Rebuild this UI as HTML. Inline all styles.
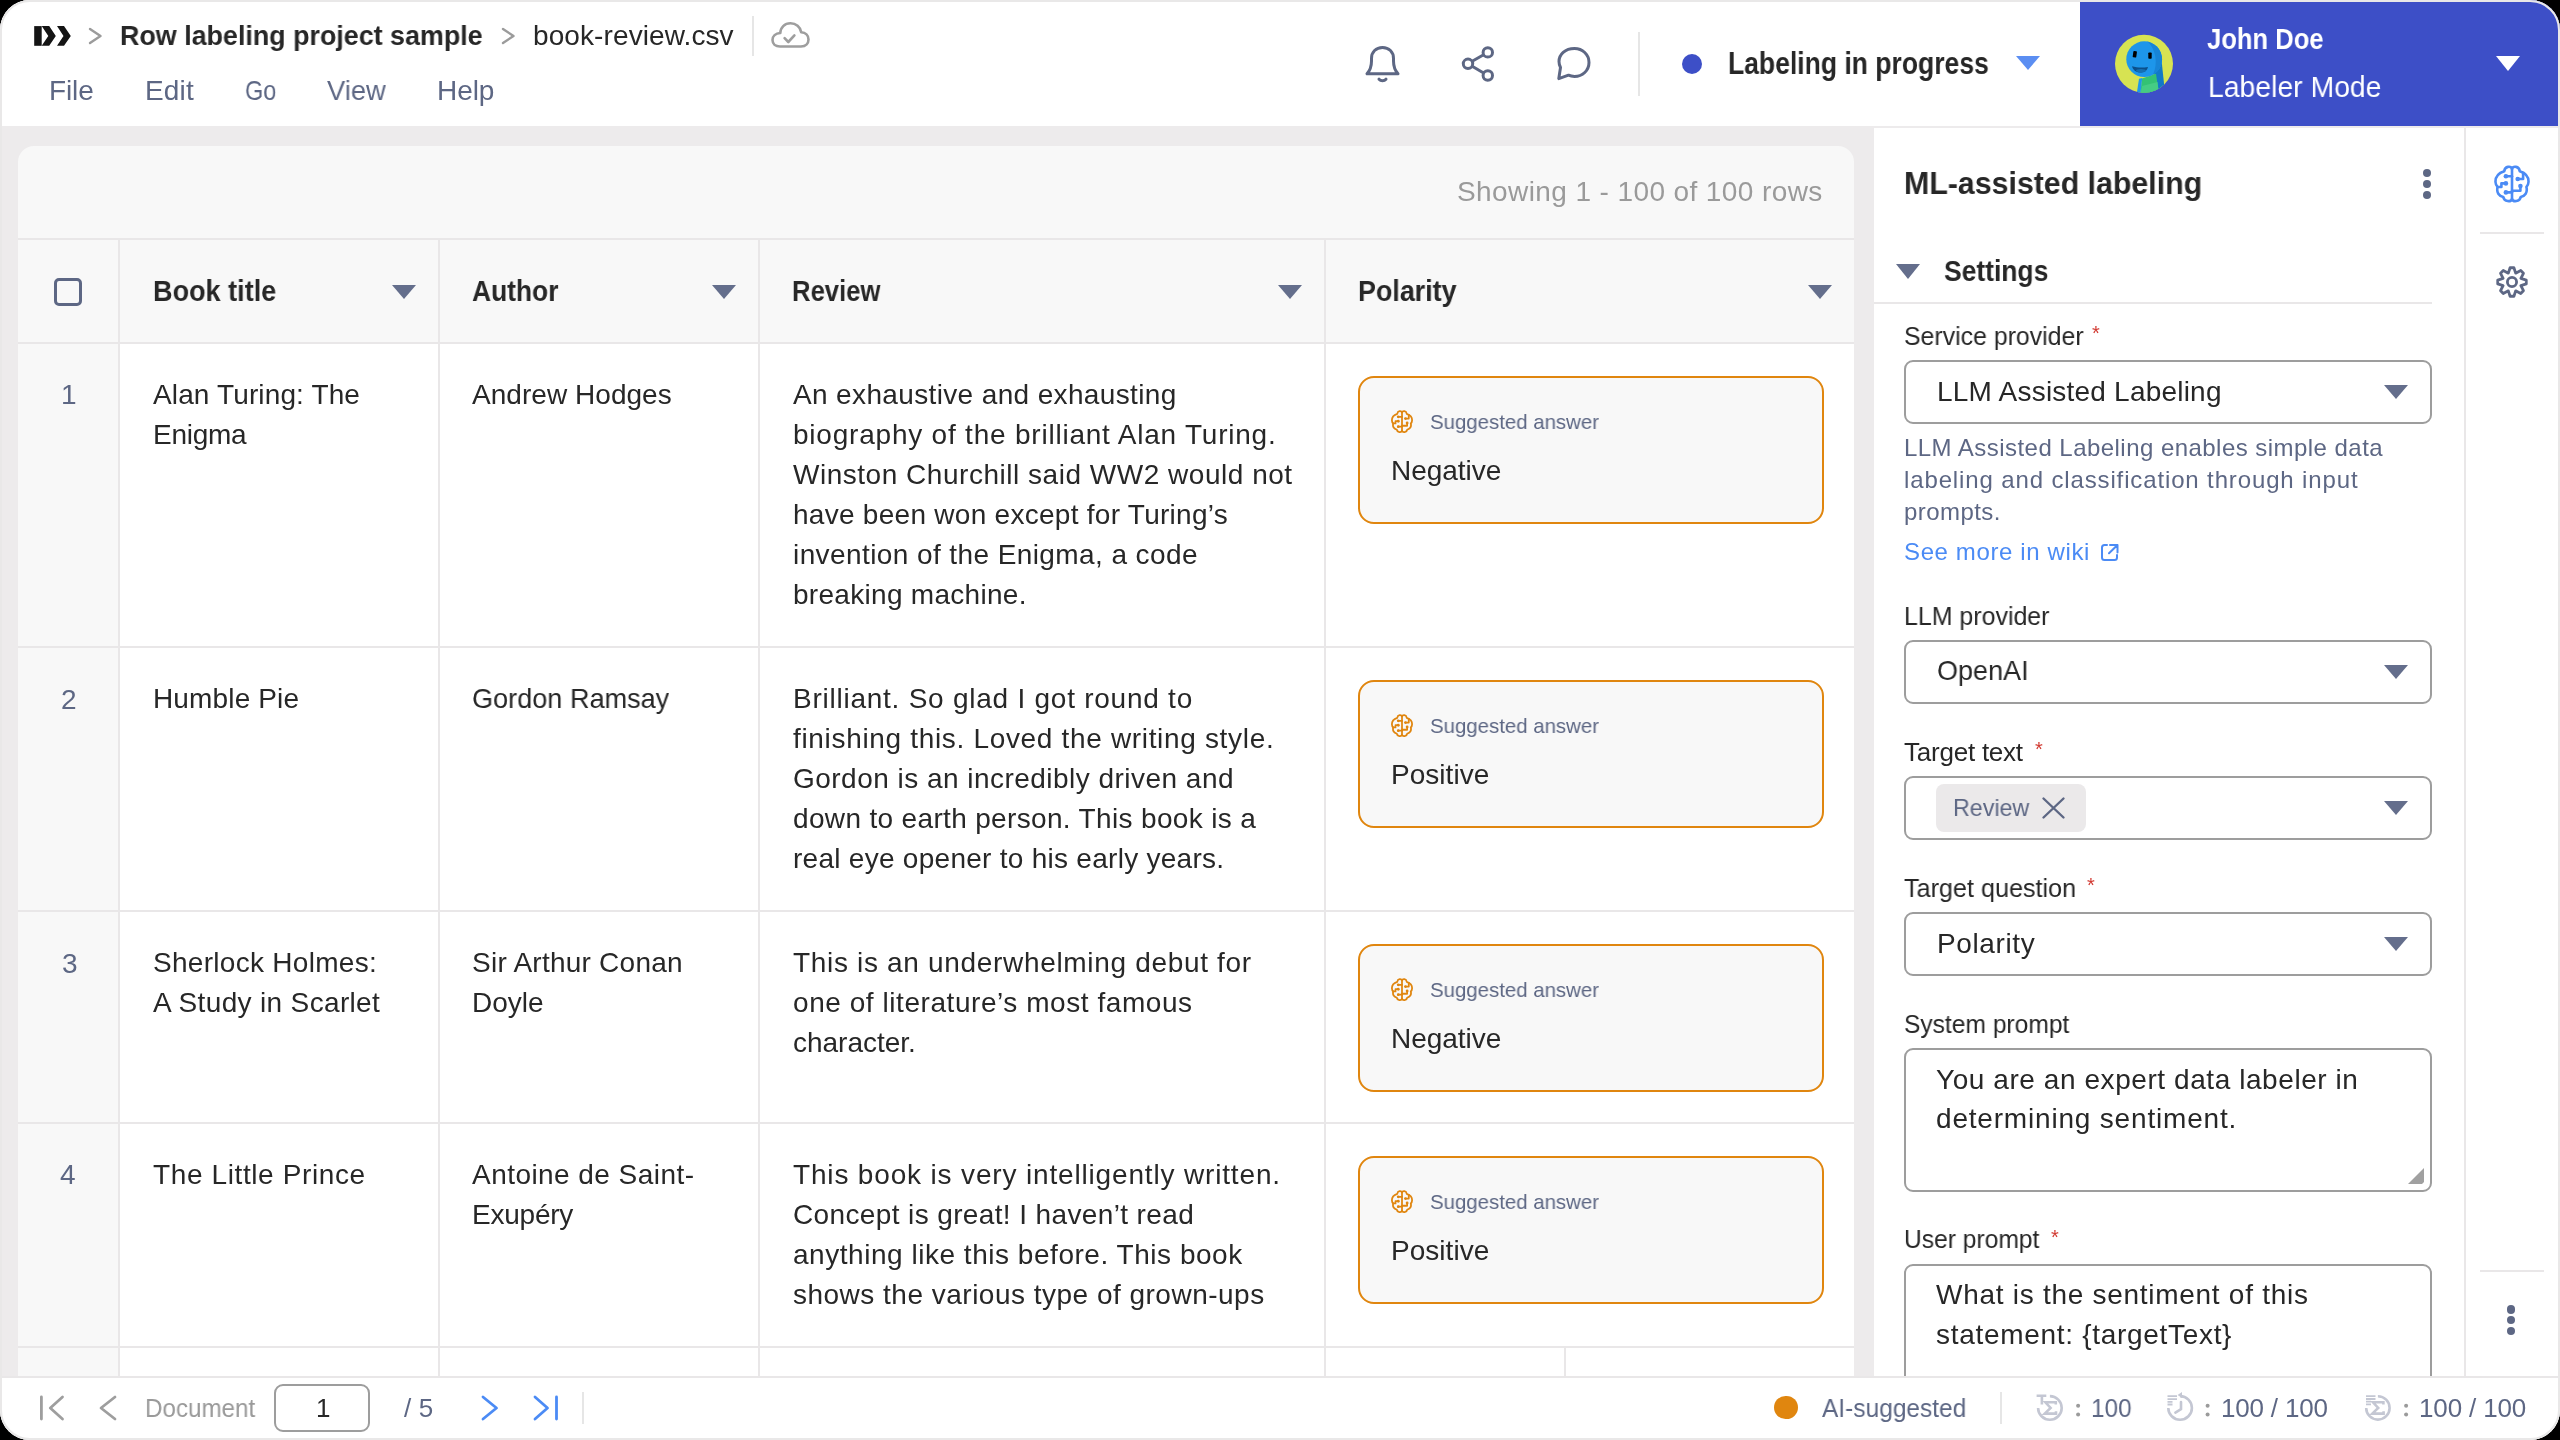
<!DOCTYPE html><html><head><meta charset="utf-8"><style>
html,body{margin:0;padding:0;width:2560px;height:1440px;overflow:hidden;background:#000;}
*{box-sizing:border-box;}
.win{position:absolute;left:0;top:0;width:2560px;height:1440px;border-radius:30px;overflow:hidden;background:#edebec;font-family:"Liberation Sans",sans-serif;}
.a{position:absolute;display:block;}
.t{position:absolute;white-space:nowrap;font-family:"Liberation Sans",sans-serif;will-change:transform;}
.hl{position:absolute;height:2px;background:#e9e7e8;}
.vl{position:absolute;width:2px;background:#e9e7e8;}
</style></head><body><div class="win">

<div class="a" style="left:0;top:0;width:2560px;height:126px;background:#fff"></div>
<div class="a" style="left:2080px;top:0;width:480px;height:126px;background:#3d4fc7"></div>
<svg class="a" style="left:0;top:0" width="80" height="60"><g fill="#141414"><rect x="34.2" y="26.1" width="7.5" height="19.7"/><polygon points="41.7,26.1 49.2,26.1 55.8,36 49.2,45.8 41.7,45.8 48.3,36"/><polygon points="57,26.1 64,26.1 70.8,36 64,45.8 57,45.8 63.5,36"/></g></svg>
<svg class="a" style="left:87px;top:26px" width="18" height="20"><polyline points="3,3 13.5,10 3,17" fill="none" stroke="#9b9b9b" stroke-width="2.4" stroke-linecap="round" stroke-linejoin="round"/></svg>
<svg class="a" style="left:499.5px;top:26px" width="18" height="20"><polyline points="3,3 13.5,10 3,17" fill="none" stroke="#9b9b9b" stroke-width="2.4" stroke-linecap="round" stroke-linejoin="round"/></svg>
<div class="a" style="left:752px;top:16px;width:2px;height:40px;background:#e6e6e6"></div>
<svg class="a" style="left:768px;top:19px" width="44" height="33" viewBox="0 0 44 33"><g fill="none" stroke="#9e9e9e" stroke-width="2.6" stroke-linecap="round" stroke-linejoin="round"><path d="M12,27.5 H33 C38,27.5 40.5,24 40.5,20.5 C40.5,16.5 37.5,13.5 33.2,13.2 C32.3,8 28,4.3 22.5,4.3 C16.5,4.3 12.5,8.5 12.3,14 C7.5,14.3 4.5,17.3 4.5,21 C4.5,24.8 7.5,27.5 12,27.5 Z"/><polyline points="16.6,19.2 20.3,23 26.4,16.4"/></g></svg>
<svg class="a" style="left:1362px;top:42px" width="40" height="44"><g fill="none" stroke="#5d6784" stroke-width="3" stroke-linecap="round" stroke-linejoin="round"><path d="M5,31.8 H36 C33,28.5 31.5,25 31.5,19 V16.5 C31.5,10 27,5.5 20.5,5.5 C14,5.5 9.5,10 9.5,16.5 V19 C9.5,25 8,28.5 5,31.8 Z"/><path d="M17,37.2 C18.8,39.2 22.2,39.2 24,37.2"/></g></svg>
<svg class="a" style="left:1458px;top:43px" width="40" height="42"><g fill="none" stroke="#5d6784" stroke-width="3"><circle cx="29.8" cy="9.4" r="4.7"/><circle cx="10" cy="20.8" r="4.7"/><circle cx="29.8" cy="32.5" r="4.7"/><path d="M14.2,18.3 L25.6,11.8 M14.2,23.3 L25.6,30"/></g></svg>
<svg class="a" style="left:1554px;top:44px" width="40" height="40"><g fill="none" stroke="#5d6784" stroke-width="3" stroke-linejoin="round"><path d="M6.5,23.5 C5.5,21.5 5,19.5 5,17.5 C5,10.5 11,4.5 20.5,4.5 C28.5,4.5 35,10.5 35,18.5 C35,26.5 28.5,32.5 20.5,32.5 C18.5,32.5 16.5,32.2 14.5,31.2 L4.8,34.6 Z"/></g></svg>
<div class="a" style="left:1638px;top:32px;width:2px;height:64px;background:#e6e6e6"></div>
<div class="a" style="left:1681.7px;top:53.5px;width:20.5px;height:20.5px;border-radius:50%;background:#3d4fc7"></div>
<svg class="a" style="left:2016px;top:56px" width="24" height="14"><polygon points="0,0 24,0 12.0,14" fill="#5b8ef2"/></svg>
<svg class="a" style="left:2113px;top:32px" width="62" height="64" viewBox="0 0 62 64"><defs><clipPath id="av"><circle cx="31" cy="31.75" r="29"/></clipPath></defs><circle cx="31" cy="31.75" r="29" fill="#d7e352"/><g clip-path="url(#av)"><polygon points="40,36 48.5,28 51.5,56 45,60" fill="#1279c6"/><polygon points="29,46.4 43,41.75 46,62 27,64" fill="#33c274"/><polygon points="29,54 44.5,50 46,62 27,64" fill="#45cc84"/><polygon points="26,46.75 29.2,46 27.2,64 23.4,64" fill="#1e98ea"/><circle cx="31.2" cy="27.2" r="17.9" fill="#1d96ea"/></g><clipPath id="hd"><circle cx="31.2" cy="27.2" r="17.9"/></clipPath><path clip-path="url(#hd)" d="M33,8 C45,9 50,20 49,30 C48,38 44,44 38,46 C45,36 45,18 33,8 Z" fill="#1784d6"/><rect x="20" y="19.2" width="3.6" height="6.3" rx="0.8" fill="#000" transform="rotate(8 21.8 22.3)"/><rect x="35.3" y="20.5" width="3.4" height="6.3" rx="0.8" fill="#000"/><path d="M19,34.3 C24,35.8 30,36 35,34.9 C34.2,38.8 31,40.6 27.5,40.6 C23,40.6 19.8,38 19,34.3 Z" fill="#0b4f8a"/><ellipse cx="28" cy="38.6" rx="5" ry="1.7" fill="#1670b3"/></svg>
<svg class="a" style="left:2496px;top:56px" width="24" height="15"><polygon points="0,0 24,0 12.0,15" fill="#fff"/></svg>
<div class="a" style="left:18px;top:146px;width:1836px;height:1240px;background:#f8f8f8;border-radius:16px 16px 0 0"></div>
<div class="a" style="left:120px;top:344px;width:1734px;height:1040px;background:#fff"></div>
<div class="hl" style="left:18px;top:238px;width:1836px"></div>
<div class="hl" style="left:18px;top:342px;width:1836px"></div>
<div class="hl" style="left:18px;top:646px;width:1836px"></div>
<div class="hl" style="left:18px;top:910px;width:1836px"></div>
<div class="hl" style="left:18px;top:1122px;width:1836px"></div>
<div class="hl" style="left:18px;top:1346px;width:1836px"></div>
<div class="vl" style="left:118px;top:240px;height:1140px"></div>
<div class="vl" style="left:438px;top:240px;height:1140px"></div>
<div class="vl" style="left:758px;top:240px;height:1140px"></div>
<div class="vl" style="left:1324px;top:240px;height:1140px"></div>
<div class="vl" style="left:1564px;top:1348px;height:40px"></div>
<div class="a" style="left:54px;top:278px;width:28px;height:28px;border:3px solid #5d6784;border-radius:5px"></div>
<svg class="a" style="left:392px;top:285px" width="24" height="14"><polygon points="0,0 24,0 12.0,14" fill="#646e8c"/></svg>
<svg class="a" style="left:712px;top:285px" width="24" height="14"><polygon points="0,0 24,0 12.0,14" fill="#646e8c"/></svg>
<svg class="a" style="left:1278px;top:285px" width="24" height="14"><polygon points="0,0 24,0 12.0,14" fill="#646e8c"/></svg>
<svg class="a" style="left:1808px;top:285px" width="24" height="14"><polygon points="0,0 24,0 12.0,14" fill="#646e8c"/></svg>
<div class="a" style="left:1358px;top:376px;width:466px;height:148px;border:2.2px solid #e0860f;border-radius:16px;background:#f8f8f8"></div>
<svg class="a" style="left:1391px;top:410px" width="22" height="23.2" viewBox="0 0 36 38" preserveAspectRatio="none"><g fill="none" stroke="#e0860f" stroke-width="2.9" stroke-linecap="round" stroke-linejoin="round"><path d="M18,4 C17,0.8 11,0.8 10.2,6.2 C4.5,8 1.3,11.5 1.5,17 C1.6,19.2 2.5,21 3.6,22 C2.2,27.5 5,31.2 9.3,32 C10.2,37 17,37.2 18,34 C19,37.2 25.8,37 26.7,32 C31,31.2 33.8,27.5 32.4,22 C33.5,21 34.4,19.2 34.5,17 C34.7,11.5 31.5,8 25.8,6.2 C25,0.8 19,0.8 18,4 Z"/><path d="M18,4 V34"/><path d="M11.9,11.2 H18"/><path d="M11.9,18.4 H7.4 V22 H3.6"/><path d="M11.9,27.4 H18"/><path d="M23.7,14 H29.1 V8"/><path d="M26.4,21.1 V25.8 H18"/></g><g fill="#e0860f"><circle cx="11.9" cy="11.2" r="2.3"/><circle cx="11.9" cy="18.4" r="2.3"/><circle cx="11.9" cy="27.4" r="2.3"/><circle cx="23.7" cy="14" r="2.3"/><circle cx="26.4" cy="21.1" r="2.3"/></g></svg>
<div class="a" style="left:1358px;top:680px;width:466px;height:148px;border:2.2px solid #e0860f;border-radius:16px;background:#f8f8f8"></div>
<svg class="a" style="left:1391px;top:714px" width="22" height="23.2" viewBox="0 0 36 38" preserveAspectRatio="none"><g fill="none" stroke="#e0860f" stroke-width="2.9" stroke-linecap="round" stroke-linejoin="round"><path d="M18,4 C17,0.8 11,0.8 10.2,6.2 C4.5,8 1.3,11.5 1.5,17 C1.6,19.2 2.5,21 3.6,22 C2.2,27.5 5,31.2 9.3,32 C10.2,37 17,37.2 18,34 C19,37.2 25.8,37 26.7,32 C31,31.2 33.8,27.5 32.4,22 C33.5,21 34.4,19.2 34.5,17 C34.7,11.5 31.5,8 25.8,6.2 C25,0.8 19,0.8 18,4 Z"/><path d="M18,4 V34"/><path d="M11.9,11.2 H18"/><path d="M11.9,18.4 H7.4 V22 H3.6"/><path d="M11.9,27.4 H18"/><path d="M23.7,14 H29.1 V8"/><path d="M26.4,21.1 V25.8 H18"/></g><g fill="#e0860f"><circle cx="11.9" cy="11.2" r="2.3"/><circle cx="11.9" cy="18.4" r="2.3"/><circle cx="11.9" cy="27.4" r="2.3"/><circle cx="23.7" cy="14" r="2.3"/><circle cx="26.4" cy="21.1" r="2.3"/></g></svg>
<div class="a" style="left:1358px;top:944px;width:466px;height:148px;border:2.2px solid #e0860f;border-radius:16px;background:#f8f8f8"></div>
<svg class="a" style="left:1391px;top:978px" width="22" height="23.2" viewBox="0 0 36 38" preserveAspectRatio="none"><g fill="none" stroke="#e0860f" stroke-width="2.9" stroke-linecap="round" stroke-linejoin="round"><path d="M18,4 C17,0.8 11,0.8 10.2,6.2 C4.5,8 1.3,11.5 1.5,17 C1.6,19.2 2.5,21 3.6,22 C2.2,27.5 5,31.2 9.3,32 C10.2,37 17,37.2 18,34 C19,37.2 25.8,37 26.7,32 C31,31.2 33.8,27.5 32.4,22 C33.5,21 34.4,19.2 34.5,17 C34.7,11.5 31.5,8 25.8,6.2 C25,0.8 19,0.8 18,4 Z"/><path d="M18,4 V34"/><path d="M11.9,11.2 H18"/><path d="M11.9,18.4 H7.4 V22 H3.6"/><path d="M11.9,27.4 H18"/><path d="M23.7,14 H29.1 V8"/><path d="M26.4,21.1 V25.8 H18"/></g><g fill="#e0860f"><circle cx="11.9" cy="11.2" r="2.3"/><circle cx="11.9" cy="18.4" r="2.3"/><circle cx="11.9" cy="27.4" r="2.3"/><circle cx="23.7" cy="14" r="2.3"/><circle cx="26.4" cy="21.1" r="2.3"/></g></svg>
<div class="a" style="left:1358px;top:1156px;width:466px;height:148px;border:2.2px solid #e0860f;border-radius:16px;background:#f8f8f8"></div>
<svg class="a" style="left:1391px;top:1190px" width="22" height="23.2" viewBox="0 0 36 38" preserveAspectRatio="none"><g fill="none" stroke="#e0860f" stroke-width="2.9" stroke-linecap="round" stroke-linejoin="round"><path d="M18,4 C17,0.8 11,0.8 10.2,6.2 C4.5,8 1.3,11.5 1.5,17 C1.6,19.2 2.5,21 3.6,22 C2.2,27.5 5,31.2 9.3,32 C10.2,37 17,37.2 18,34 C19,37.2 25.8,37 26.7,32 C31,31.2 33.8,27.5 32.4,22 C33.5,21 34.4,19.2 34.5,17 C34.7,11.5 31.5,8 25.8,6.2 C25,0.8 19,0.8 18,4 Z"/><path d="M18,4 V34"/><path d="M11.9,11.2 H18"/><path d="M11.9,18.4 H7.4 V22 H3.6"/><path d="M11.9,27.4 H18"/><path d="M23.7,14 H29.1 V8"/><path d="M26.4,21.1 V25.8 H18"/></g><g fill="#e0860f"><circle cx="11.9" cy="11.2" r="2.3"/><circle cx="11.9" cy="18.4" r="2.3"/><circle cx="11.9" cy="27.4" r="2.3"/><circle cx="23.7" cy="14" r="2.3"/><circle cx="26.4" cy="21.1" r="2.3"/></g></svg>
<div class="a" style="left:1874px;top:128px;width:686px;height:1260px;background:#fff"></div>
<div class="vl" style="left:2464px;top:128px;height:1260px"></div>
<div class="hl" style="left:2480px;top:232px;width:64px"></div>
<div class="hl" style="left:2480px;top:1270px;width:64px"></div>
<svg class="a" style="left:2494px;top:165px" width="36" height="38" viewBox="0 0 36 38" preserveAspectRatio="none"><g fill="none" stroke="#4b8bf5" stroke-width="2.6" stroke-linecap="round" stroke-linejoin="round"><path d="M18,4 C17,0.8 11,0.8 10.2,6.2 C4.5,8 1.3,11.5 1.5,17 C1.6,19.2 2.5,21 3.6,22 C2.2,27.5 5,31.2 9.3,32 C10.2,37 17,37.2 18,34 C19,37.2 25.8,37 26.7,32 C31,31.2 33.8,27.5 32.4,22 C33.5,21 34.4,19.2 34.5,17 C34.7,11.5 31.5,8 25.8,6.2 C25,0.8 19,0.8 18,4 Z"/><path d="M18,4 V34"/><path d="M11.9,11.2 H18"/><path d="M11.9,18.4 H7.4 V22 H3.6"/><path d="M11.9,27.4 H18"/><path d="M23.7,14 H29.1 V8"/><path d="M26.4,21.1 V25.8 H18"/></g><g fill="#4b8bf5"><circle cx="11.9" cy="11.2" r="2.3"/><circle cx="11.9" cy="18.4" r="2.3"/><circle cx="11.9" cy="27.4" r="2.3"/><circle cx="23.7" cy="14" r="2.3"/><circle cx="26.4" cy="21.1" r="2.3"/></g></svg>
<svg class="a" style="left:2492px;top:262px" width="40" height="40"><g fill="none" stroke="#5d6784" stroke-width="2.8" stroke-linejoin="round"><path d="M18.08,5.73 L21.92,5.73 L23.67,11.13 L28.74,8.55 L31.45,11.26 L28.87,16.33 L34.27,18.08 L34.27,21.92 L28.87,23.67 L31.45,28.74 L28.74,31.45 L23.67,28.87 L21.92,34.27 L18.08,34.27 L16.33,28.87 L11.26,31.45 L8.55,28.74 L11.13,23.67 L5.73,21.92 L5.73,18.08 L11.13,16.33 L8.55,11.26 L11.26,8.55 L16.33,11.13 Z"/><circle cx="20" cy="20" r="4.6"/></g></svg>
<div class="a" style="left:2422.7px;top:168.7px;width:8.6px;height:8.6px;border-radius:50%;background:#5d6784"></div>
<div class="a" style="left:2422.7px;top:179.7px;width:8.6px;height:8.6px;border-radius:50%;background:#5d6784"></div>
<div class="a" style="left:2422.7px;top:190.7px;width:8.6px;height:8.6px;border-radius:50%;background:#5d6784"></div>
<div class="a" style="left:2506.7px;top:1305.2px;width:8.6px;height:8.6px;border-radius:50%;background:#5d6784"></div>
<div class="a" style="left:2506.7px;top:1315.7px;width:8.6px;height:8.6px;border-radius:50%;background:#5d6784"></div>
<div class="a" style="left:2506.7px;top:1326.7px;width:8.6px;height:8.6px;border-radius:50%;background:#5d6784"></div>
<svg class="a" style="left:1896px;top:264px" width="24" height="15"><polygon points="0,0 24,0 12.0,15" fill="#646e8c"/></svg>
<div class="hl" style="left:1874px;top:302px;width:558px"></div>
<div class="a" style="left:1904px;top:360px;width:528px;height:64px;border:2px solid #9d9d9d;border-radius:9px;background:#fff"></div>
<svg class="a" style="left:2384px;top:385px" width="24" height="14"><polygon points="0,0 24,0 12.0,14" fill="#646e8c"/></svg>
<div class="a" style="left:1904px;top:640px;width:528px;height:64px;border:2px solid #9d9d9d;border-radius:9px;background:#fff"></div>
<svg class="a" style="left:2384px;top:665px" width="24" height="14"><polygon points="0,0 24,0 12.0,14" fill="#646e8c"/></svg>
<div class="a" style="left:1904px;top:776px;width:528px;height:64px;border:2px solid #9d9d9d;border-radius:9px;background:#fff"></div>
<svg class="a" style="left:2384px;top:801px" width="24" height="14"><polygon points="0,0 24,0 12.0,14" fill="#646e8c"/></svg>
<div class="a" style="left:1904px;top:912px;width:528px;height:64px;border:2px solid #9d9d9d;border-radius:9px;background:#fff"></div>
<svg class="a" style="left:2384px;top:937px" width="24" height="14"><polygon points="0,0 24,0 12.0,14" fill="#646e8c"/></svg>
<div class="a" style="left:1936px;top:784px;width:150px;height:48px;border-radius:8px;background:#ebe9ea"></div>
<svg class="a" style="left:2040px;top:795px" width="28" height="26"><g stroke="#5d6784" stroke-width="2.4" stroke-linecap="round"><path d="M3.5,3.5 L23.5,22.5 M23.5,3.5 L3.5,22.5"/></g></svg>
<div class="t" style="left:2092px;top:323px;font-size:20px;line-height:20px;color:#d23a32">*</div>
<div class="t" style="left:2035px;top:739px;font-size:20px;line-height:20px;color:#d23a32">*</div>
<div class="t" style="left:2087px;top:875px;font-size:20px;line-height:20px;color:#d23a32">*</div>
<div class="t" style="left:2051px;top:1227px;font-size:20px;line-height:20px;color:#d23a32">*</div>
<svg class="a" style="left:2098px;top:541px" width="24" height="22"><g fill="none" stroke="#4b8bf5" stroke-width="2" stroke-linecap="round" stroke-linejoin="round"><path d="M9,4 H6.5 C5,4 4,5 4,6.5 V16.5 C4,18 5,19 6.5,19 H16.5 C18,19 19,18 19,16.5 V14"/><path d="M12,4 H19.5 V11.5 M19.5,4 L11,12.3"/></g></svg>
<div class="a" style="left:1904px;top:1048px;width:528px;height:144px;border:2px solid #9d9d9d;border-radius:9px;background:#fff"></div>
<svg class="a" style="left:2406px;top:1166px" width="20" height="20"><polygon points="2,18 18,2 18,16 16,18" fill="#a0a0a0"/></svg>
<div class="a" style="left:1904px;top:1264px;width:528px;height:160px;border:2px solid #9d9d9d;border-radius:9px;background:#fff"></div>
<div class="t" style="left:120.3px;top:16.5px;font-size:28px;line-height:38px;font-weight:700;color:#272727;letter-spacing:0.000px;transform:scaleX(0.9590);transform-origin:0 0;">Row labeling project sample</div>
<div class="t" style="left:533.0px;top:16.5px;font-size:28px;line-height:38px;color:#272727;letter-spacing:0.100px;">book-review.csv</div>
<div class="t" style="left:49.4px;top:72px;font-size:28px;line-height:38px;color:#5d6784;letter-spacing:-0.133px;">File</div>
<div class="t" style="left:145.0px;top:72px;font-size:28px;line-height:38px;color:#5d6784;letter-spacing:0.167px;">Edit</div>
<div class="t" style="left:245.0px;top:72px;font-size:28px;line-height:38px;color:#5d6784;letter-spacing:0.000px;transform:scaleX(0.8378);transform-origin:0 0;">Go</div>
<div class="t" style="left:326.5px;top:72px;font-size:28px;line-height:38px;color:#5d6784;letter-spacing:0.000px;transform:scaleX(0.9754);transform-origin:0 0;">View</div>
<div class="t" style="left:436.7px;top:72px;font-size:28px;line-height:38px;color:#5d6784;letter-spacing:-0.067px;">Help</div>
<div class="t" style="left:1728.0px;top:42px;font-size:32px;line-height:42px;font-weight:700;color:#272727;letter-spacing:0.000px;transform:scaleX(0.8286);transform-origin:0 0;">Labeling in progress</div>
<div class="t" style="left:2207.0px;top:19px;font-size:30px;line-height:40px;font-weight:700;color:#fff;letter-spacing:0.000px;transform:scaleX(0.8526);transform-origin:0 0;">John Doe</div>
<div class="t" style="left:2208.0px;top:67px;font-size:30px;line-height:40px;color:#fff;letter-spacing:0.000px;transform:scaleX(0.9454);transform-origin:0 0;">Labeler Mode</div>
<div class="t" style="left:1456.6px;top:173px;font-size:28px;line-height:38px;color:#9a9a9a;letter-spacing:0.400px;">Showing 1 - 100 of 100 rows</div>
<div class="t" style="left:152.5px;top:271px;font-size:30px;line-height:40px;font-weight:700;color:#272727;letter-spacing:0.000px;transform:scaleX(0.9015);transform-origin:0 0;">Book title</div>
<div class="t" style="left:472.0px;top:271px;font-size:30px;line-height:40px;font-weight:700;color:#272727;letter-spacing:0.000px;transform:scaleX(0.8788);transform-origin:0 0;">Author</div>
<div class="t" style="left:792.0px;top:271px;font-size:30px;line-height:40px;font-weight:700;color:#272727;letter-spacing:0.000px;transform:scaleX(0.8558);transform-origin:0 0;">Review</div>
<div class="t" style="left:1358.3px;top:271px;font-size:30px;line-height:40px;font-weight:700;color:#272727;letter-spacing:0.000px;transform:scaleX(0.8964);transform-origin:0 0;">Polarity</div>
<div class="t" style="left:61.0px;top:376px;font-size:28px;line-height:38px;color:#5d6784;letter-spacing:0.000px;">1</div>
<div class="t" style="left:61.3px;top:681px;font-size:28px;line-height:38px;color:#5d6784;letter-spacing:0.000px;">2</div>
<div class="t" style="left:61.5px;top:945px;font-size:28px;line-height:38px;color:#5d6784;letter-spacing:0.000px;">3</div>
<div class="t" style="left:59.8px;top:1156px;font-size:28px;line-height:38px;color:#5d6784;letter-spacing:0.000px;">4</div>
<div class="t" style="left:152.5px;top:376px;font-size:28px;line-height:38px;color:#272727;letter-spacing:0.133px;">Alan Turing: The</div>
<div class="t" style="left:152.5px;top:416px;font-size:28px;line-height:38px;color:#272727;letter-spacing:-0.250px;">Enigma</div>
<div class="t" style="left:472.2px;top:376px;font-size:28px;line-height:38px;color:#272727;letter-spacing:0.042px;">Andrew Hodges</div>
<div class="t" style="left:792.7px;top:376px;font-size:28px;line-height:38px;color:#272727;letter-spacing:0.359px;">An exhaustive and exhausting</div>
<div class="t" style="left:792.7px;top:416px;font-size:28px;line-height:38px;color:#272727;letter-spacing:0.784px;">biography of the brilliant Alan Turing.</div>
<div class="t" style="left:792.7px;top:456px;font-size:28px;line-height:38px;color:#272727;letter-spacing:0.523px;">Winston Churchill said WW2 would not</div>
<div class="t" style="left:792.7px;top:496px;font-size:28px;line-height:38px;color:#272727;letter-spacing:0.275px;">have been won except for Turing’s</div>
<div class="t" style="left:792.7px;top:536px;font-size:28px;line-height:38px;color:#272727;letter-spacing:0.410px;">invention of the Enigma, a code</div>
<div class="t" style="left:792.7px;top:576px;font-size:28px;line-height:38px;color:#272727;letter-spacing:0.294px;">breaking machine.</div>
<div class="t" style="left:152.5px;top:680px;font-size:28px;line-height:38px;color:#272727;letter-spacing:0.144px;">Humble Pie</div>
<div class="t" style="left:472.2px;top:680px;font-size:28px;line-height:38px;color:#272727;letter-spacing:0.000px;transform:scaleX(0.9676);transform-origin:0 0;">Gordon Ramsay</div>
<div class="t" style="left:792.7px;top:680px;font-size:28px;line-height:38px;color:#272727;letter-spacing:0.753px;">Brilliant. So glad I got round to</div>
<div class="t" style="left:792.7px;top:720px;font-size:28px;line-height:38px;color:#272727;letter-spacing:0.672px;">finishing this. Loved the writing style.</div>
<div class="t" style="left:792.7px;top:760px;font-size:28px;line-height:38px;color:#272727;letter-spacing:0.473px;">Gordon is an incredibly driven and</div>
<div class="t" style="left:792.7px;top:800px;font-size:28px;line-height:38px;color:#272727;letter-spacing:0.340px;">down to earth person. This book is a</div>
<div class="t" style="left:792.7px;top:840px;font-size:28px;line-height:38px;color:#272727;letter-spacing:0.274px;">real eye opener to his early years.</div>
<div class="t" style="left:152.5px;top:944px;font-size:28px;line-height:38px;color:#272727;letter-spacing:0.287px;">Sherlock Holmes:</div>
<div class="t" style="left:152.5px;top:984px;font-size:28px;line-height:38px;color:#272727;letter-spacing:0.341px;">A Study in Scarlet</div>
<div class="t" style="left:472.2px;top:944px;font-size:28px;line-height:38px;color:#272727;letter-spacing:0.240px;">Sir Arthur Conan</div>
<div class="t" style="left:472.2px;top:984px;font-size:28px;line-height:38px;color:#272727;letter-spacing:0.025px;">Doyle</div>
<div class="t" style="left:792.7px;top:944px;font-size:28px;line-height:38px;color:#272727;letter-spacing:0.676px;">This is an underwhelming debut for</div>
<div class="t" style="left:792.7px;top:984px;font-size:28px;line-height:38px;color:#272727;letter-spacing:0.557px;">one of literature’s most famous</div>
<div class="t" style="left:792.7px;top:1024px;font-size:28px;line-height:38px;color:#272727;letter-spacing:-0.011px;">character.</div>
<div class="t" style="left:152.5px;top:1156px;font-size:28px;line-height:38px;color:#272727;letter-spacing:0.613px;">The Little Prince</div>
<div class="t" style="left:472.2px;top:1156px;font-size:28px;line-height:38px;color:#272727;letter-spacing:0.450px;">Antoine de Saint-</div>
<div class="t" style="left:472.2px;top:1196px;font-size:28px;line-height:38px;color:#272727;letter-spacing:-0.233px;">Exupéry</div>
<div class="t" style="left:792.7px;top:1156px;font-size:28px;line-height:38px;color:#272727;letter-spacing:0.838px;">This book is very intelligently written.</div>
<div class="t" style="left:792.7px;top:1196px;font-size:28px;line-height:38px;color:#272727;letter-spacing:0.374px;">Concept is great! I haven’t read</div>
<div class="t" style="left:792.7px;top:1236px;font-size:28px;line-height:38px;color:#272727;letter-spacing:0.531px;">anything like this before. This book</div>
<div class="t" style="left:792.7px;top:1276px;font-size:28px;line-height:38px;color:#272727;letter-spacing:0.491px;">shows the various type of grown-ups</div>
<div class="t" style="left:1430.3px;top:406px;font-size:21px;line-height:31px;color:#5d6784;letter-spacing:0.000px;transform:scaleX(0.9718);transform-origin:0 0;">Suggested answer</div>
<div class="t" style="left:1391.3px;top:452px;font-size:28px;line-height:38px;color:#272727;letter-spacing:-0.043px;">Negative</div>
<div class="t" style="left:1430.3px;top:710px;font-size:21px;line-height:31px;color:#5d6784;letter-spacing:0.000px;transform:scaleX(0.9718);transform-origin:0 0;">Suggested answer</div>
<div class="t" style="left:1391.3px;top:756px;font-size:28px;line-height:38px;color:#272727;letter-spacing:0.029px;">Positive</div>
<div class="t" style="left:1430.3px;top:974px;font-size:21px;line-height:31px;color:#5d6784;letter-spacing:0.000px;transform:scaleX(0.9718);transform-origin:0 0;">Suggested answer</div>
<div class="t" style="left:1391.3px;top:1020px;font-size:28px;line-height:38px;color:#272727;letter-spacing:-0.043px;">Negative</div>
<div class="t" style="left:1430.3px;top:1186px;font-size:21px;line-height:31px;color:#5d6784;letter-spacing:0.000px;transform:scaleX(0.9718);transform-origin:0 0;">Suggested answer</div>
<div class="t" style="left:1391.3px;top:1232px;font-size:28px;line-height:38px;color:#272727;letter-spacing:0.029px;">Positive</div>
<div class="t" style="left:1904.3px;top:162px;font-size:32px;line-height:42px;font-weight:700;color:#272727;letter-spacing:0.000px;transform:scaleX(0.9473);transform-origin:0 0;">ML-assisted labeling</div>
<div class="t" style="left:1944.3px;top:251px;font-size:30px;line-height:40px;font-weight:700;color:#272727;letter-spacing:0.000px;transform:scaleX(0.8814);transform-origin:0 0;">Settings</div>
<div class="t" style="left:1904.3px;top:318px;font-size:26px;line-height:36px;color:#272727;letter-spacing:0.000px;transform:scaleX(0.9559);transform-origin:0 0;">Service provider</div>
<div class="t" style="left:1904.3px;top:597.5px;font-size:26px;line-height:36px;color:#272727;letter-spacing:0.000px;transform:scaleX(0.9586);transform-origin:0 0;">LLM provider</div>
<div class="t" style="left:1904.3px;top:734px;font-size:26px;line-height:36px;color:#272727;letter-spacing:-0.230px;">Target text</div>
<div class="t" style="left:1904.3px;top:870px;font-size:26px;line-height:36px;color:#272727;letter-spacing:0.000px;transform:scaleX(0.9685);transform-origin:0 0;">Target question</div>
<div class="t" style="left:1904.3px;top:1005.5px;font-size:26px;line-height:36px;color:#272727;letter-spacing:0.000px;transform:scaleX(0.9455);transform-origin:0 0;">System prompt</div>
<div class="t" style="left:1904.3px;top:1221px;font-size:26px;line-height:36px;color:#272727;letter-spacing:0.000px;transform:scaleX(0.9465);transform-origin:0 0;">User prompt</div>
<div class="t" style="left:1936.7px;top:373px;font-size:28px;line-height:38px;color:#272727;letter-spacing:0.215px;">LLM Assisted Labeling</div>
<div class="t" style="left:1936.7px;top:652px;font-size:28px;line-height:38px;color:#272727;letter-spacing:0.000px;transform:scaleX(0.9642);transform-origin:0 0;">OpenAI</div>
<div class="t" style="left:1936.7px;top:925px;font-size:28px;line-height:38px;color:#272727;letter-spacing:0.614px;">Polarity</div>
<div class="t" style="left:1904.0px;top:431px;font-size:24px;line-height:34px;color:#5d6784;letter-spacing:0.458px;">LLM Assisted Labeling enables simple data</div>
<div class="t" style="left:1904.0px;top:463.3px;font-size:24px;line-height:34px;color:#5d6784;letter-spacing:0.867px;">labeling and classification through input</div>
<div class="t" style="left:1904.0px;top:494.5px;font-size:24px;line-height:34px;color:#5d6784;letter-spacing:0.429px;">prompts.</div>
<div class="t" style="left:1904.0px;top:535px;font-size:24px;line-height:34px;color:#4b8bf5;letter-spacing:0.620px;">See more in wiki</div>
<div class="t" style="left:1952.7px;top:791px;font-size:24px;line-height:34px;color:#5d6784;letter-spacing:0.000px;transform:scaleX(0.9696);transform-origin:0 0;">Review</div>
<div class="t" style="left:1936.4px;top:1060.6px;font-size:28px;line-height:38px;color:#272727;letter-spacing:0.569px;">You are an expert data labeler in</div>
<div class="t" style="left:1936.4px;top:1100.3px;font-size:28px;line-height:38px;color:#272727;letter-spacing:0.810px;">determining sentiment.</div>
<div class="t" style="left:1936.4px;top:1276px;font-size:28px;line-height:38px;color:#272727;letter-spacing:0.721px;">What is the sentiment of this</div>
<div class="t" style="left:1936.4px;top:1315.5px;font-size:28px;line-height:38px;color:#272727;letter-spacing:0.695px;">statement: {targetText}</div>
<div class="a" style="left:0;top:1376px;width:2560px;height:64px;background:#fff;border-top:2px solid #e9e7e8"></div>
<svg class="a" style="left:0;top:0" width="600" height="1440"><g fill="none" stroke="#9e9e9e" stroke-width="2.8" stroke-linecap="round" stroke-linejoin="round"><polyline points="62.5,1397 50.3,1408.0 62.5,1419"/><line x1="41.4" y1="1397" x2="41.4" y2="1419"/></g></svg>
<svg class="a" style="left:0;top:0" width="600" height="1440"><g fill="none" stroke="#9e9e9e" stroke-width="2.8" stroke-linecap="round" stroke-linejoin="round"><polyline points="115,1397 101,1408.0 115,1419"/></g></svg>
<svg class="a" style="left:0;top:0" width="600" height="1440"><g fill="none" stroke="#4b8bf5" stroke-width="2.8" stroke-linecap="round" stroke-linejoin="round"><polyline points="483,1397 496.5,1408.0 483,1419"/></g></svg>
<svg class="a" style="left:0;top:0" width="600" height="1440"><g fill="none" stroke="#4b8bf5" stroke-width="2.8" stroke-linecap="round" stroke-linejoin="round"><polyline points="535,1397 547.5,1408.0 535,1419"/><line x1="556.5" y1="1397" x2="556.5" y2="1419"/></g></svg>
<div class="a" style="left:274px;top:1384px;width:96px;height:48px;border:2px solid #9d9d9d;border-radius:9px"></div>
<div class="a" style="left:582px;top:1392px;width:2px;height:32px;background:#e6e6e6"></div>
<div class="a" style="left:2000px;top:1392px;width:2px;height:32px;background:#e6e6e6"></div>
<div class="a" style="left:1774.4px;top:1396.2px;width:23.3px;height:23.3px;border-radius:50%;background:#e0860f"></div>
<svg class="a" style="left:2020px;top:1380px" width="400" height="50" viewBox="2020 1380 400 50"><g fill="none" stroke="#c4c7d3" stroke-width="2.6"><path d="M2049.9,1396.1000000000001 A11.8,11.8 0 1 1 2038.1000000000001,1407.9"/><path d="M2055.7999999999997,1404.5 V1402.3000000000002 H2045.3999999999999 L2050.6,1407.9 L2044.6999999999998,1413.6000000000001 H2056.0 V1411.3000000000002" stroke-linejoin="miter"/><path d="M2036.6,1395.8 H2046.3 M2041.9,1395.8 V1404.6"/><path d="M2180.1,1396.1000000000001 A11.8,11.8 0 1 1 2168.2999999999997,1407.9"/><g stroke-width="1.8" stroke-linecap="butt"><path d="M2167.5,1396.2 H2177.0 M2167.5,1399.1000000000001 H2177.0 M2167.5,1401.8 H2172.5 M2167.5,1404.5 H2172.5"/></g><path d="M2181,1402 V1409.2 L2175.4,1412.6" stroke-linejoin="round" stroke-linecap="round"/><polygon points="2177.6,1395 2182,1392 2182,1398" fill="#c4c7d3" stroke="none"/><path d="M2377.9,1396.2 A11.7,11.7 0 1 1 2366.2000000000003,1407.9"/><g stroke-width="1.8" stroke-linecap="butt"><path d="M2366,1396.1 H2375.5 M2366,1399.0 H2375.5 M2366,1401.6999999999998 H2371 M2366,1404.3999999999999 H2371"/></g><path d="M2383.3999999999996,1404.5 V1402.3000000000002 H2373.0 L2378.2,1407.9 L2372.2999999999997,1413.6000000000001 H2383.6 V1411.3000000000002" stroke-linejoin="miter"/></g><g fill="#9b9b9b"><circle cx="2078.1" cy="1405.8" r="2"/><circle cx="2078.1" cy="1414.4" r="2"/><circle cx="2207.6" cy="1405.8" r="2"/><circle cx="2207.6" cy="1414.4" r="2"/><circle cx="2406.1" cy="1405.8" r="2"/><circle cx="2406.1" cy="1414.4" r="2"/></g></svg>
<div class="t" style="left:145.0px;top:1390px;font-size:26px;line-height:36px;color:#9a9a9a;letter-spacing:0.000px;transform:scaleX(0.9303);transform-origin:0 0;">Document</div>
<div class="t" style="left:316.0px;top:1390px;font-size:26px;line-height:36px;color:#272727;letter-spacing:0.000px;">1</div>
<div class="t" style="left:404.2px;top:1390px;font-size:26px;line-height:36px;color:#5d6784;letter-spacing:0.100px;">/ 5</div>
<div class="t" style="left:1822.3px;top:1389.5px;font-size:26px;line-height:36px;color:#5d6784;letter-spacing:0.000px;transform:scaleX(0.9418);transform-origin:0 0;">AI-suggested</div>
<div class="t" style="left:2090.6px;top:1389.5px;font-size:26px;line-height:36px;color:#5d6784;letter-spacing:0.000px;transform:scaleX(0.9349);transform-origin:0 0;">100</div>
<div class="t" style="left:2221.0px;top:1389.5px;font-size:26px;line-height:36px;color:#5d6784;letter-spacing:-0.188px;">100 / 100</div>
<div class="t" style="left:2418.9px;top:1389.5px;font-size:26px;line-height:36px;color:#5d6784;letter-spacing:-0.137px;">100 / 100</div>
</div><div style="position:absolute;left:0;top:0;width:2560px;height:1440px;border-radius:30px;border:2px solid #e9e8e8;pointer-events:none"></div></body></html>
